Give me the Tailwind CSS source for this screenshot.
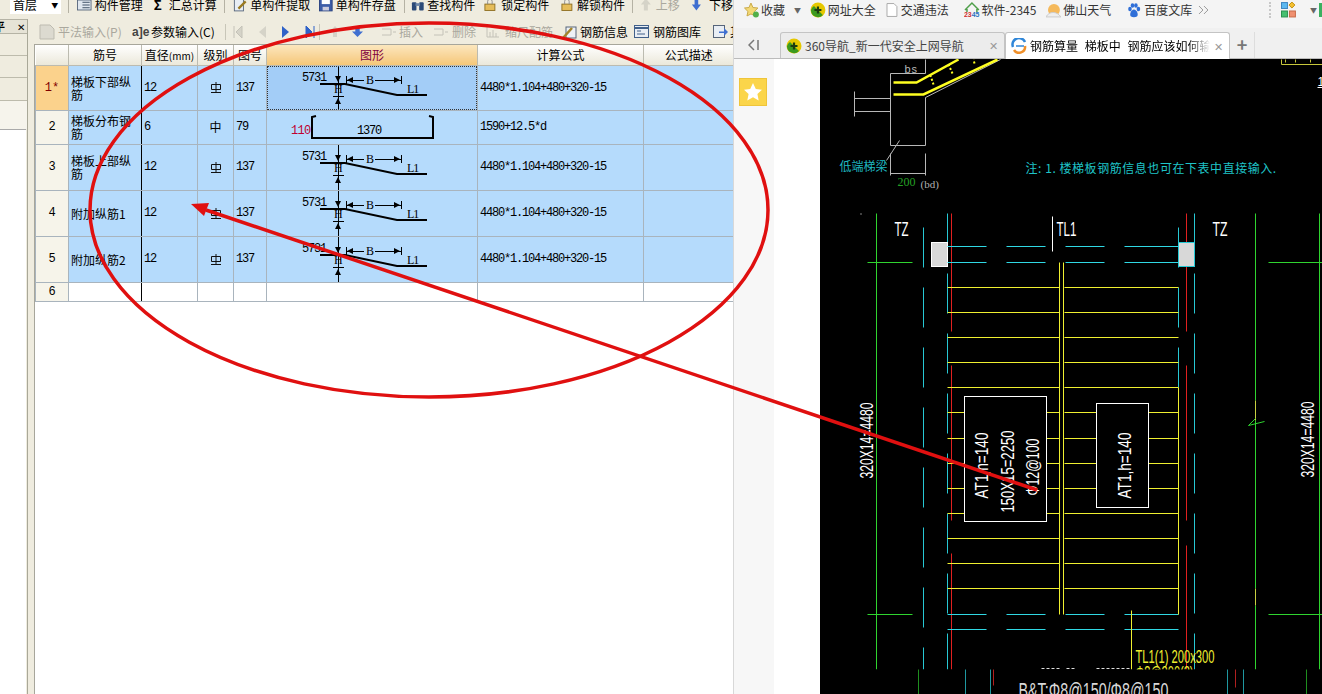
<!DOCTYPE html>
<html lang="zh-CN">
<head>
  <meta charset="UTF-8">
  <title>钢筋算量 梯板中 钢筋应该如何输入</title>
  <script src="https://cdn.jsdelivr.net/npm/@tailwindcss/browser@4"></script>
</head>
<body class="bg-white">
  <svg class="hidden">
    <symbol id="bent">
      <path d="M71.500 0V46" stroke="#000" fill="none"/>
      <path d="M53 18H78L130 29H160" stroke="#000" stroke-width="2" fill="none"/>
      <path d="M66 30.500H77M79 14.500H97M108 14.500H134M79.500 10V18M134.500 10V18" stroke="#000" fill="none"/>
      <path d="M68 10H74L71 16ZM68 38H74L71 32ZM80 14L86 11V17ZM133 14L127 11V17Z" fill="#000"/>
      <text x="35" y="15" font-size="12" font-family="Liberation Mono" fill="#000" textLength="24">5731</text>
      <text x="99" y="18" font-size="12" font-family="Liberation Serif" fill="#000">B</text>
      <text x="67" y="27" font-size="12" font-family="Liberation Serif" fill="#000">H</text>
      <text x="140" y="27" font-size="12" font-family="Liberation Serif" fill="#000">L1</text>
    </symbol>
    <symbol id="grade">
      <path d="M1.500 2.500H10.500V7.500H1.500ZM6 0V10M1 10.500H11" stroke="#111" fill="none"/>
    </symbol>
    <symbol id="i360" viewBox="0 0 16 16">
      <circle cx="8" cy="8" r="7.5" fill="#e6c800"/>
      <path d="M1 8a7 7 0 0 0 12 5L4 4a7 7 0 0 0-3 4Z" fill="#3c9a1e"/>
      <path d="M8 4.500V11.500M4.500 8H11.500" stroke="#1c3c10" stroke-width="2.200"/>
    </symbol>
  </svg>

  <div class="relative flex w-[1322px] h-[694px] overflow-hidden font-['Noto_Sans_CJK_SC',sans-serif] text-[12px] text-black">

    <!-- left: rebar software -->
    <div class="w-[734px] h-full shrink-0 bg-[#efecdf] flex flex-col overflow-hidden border-r border-[#d8d8d8]">
      <div class="h-[16px] -mt-[5px] flex items-center shrink-0 whitespace-nowrap text-[12px] leading-[16px] pt-[3px] overflow-visible">
        <div class="w-[56px] h-[18px] ml-[10px] bg-white flex items-center justify-between px-[3px]"><span>首层</span><span class="text-[7px]">▼</span></div>
        <div class="w-px h-[16px] bg-[#b5b2a4] ml-[7px]"></div>
        <svg class="w-[16px] h-[14px] ml-[8px]" viewBox="0 0 16 14"><rect x=".5" y="1.500" width="15" height="11" fill="#dfe6ee" stroke="#56657a"/><path d="M6 4h8M6 7h8M6 10h8" stroke="#34465c"/></svg>
        <span class="ml-[3px]">构件管理</span>
        <span class="ml-[11px] w-[10px] font-bold text-[13px]">Σ</span>
        <span class="ml-[6px]">汇总计算</span>
        <div class="w-px h-[16px] bg-[#b5b2a4] ml-[7px]"></div>
        <svg class="w-[16px] h-[14px] ml-[8px]" viewBox="0 0 16 14"><rect x="1.500" y=".5" width="10" height="13" fill="#e8eef5" stroke="#56657a"/><path d="M6 11L14 3" stroke="#9a7a20" stroke-width="2.500"/></svg>
        <span class="ml-[3px]">单构件提取</span>
        <svg class="w-[15px] h-[14px] ml-[9px]" viewBox="0 0 15 14"><rect x=".5" y=".5" width="14" height="13" fill="#3d5da8" stroke="#27407e"/><rect x="3" y="1" width="9" height="5" fill="#fff"/><rect x="4" y="9" width="7" height="4" fill="#ccd"/></svg>
        <span class="ml-[3px]">单构件存盘</span>
        <div class="w-px h-[16px] bg-[#b5b2a4] ml-[8px]"></div>
        <svg class="w-[15px] h-[14px] ml-[6px]" viewBox="0 0 15 14"><rect x="1" y="4" width="5" height="9" rx="1" fill="#2c4a78"/><rect x="9" y="4" width="5" height="9" rx="1" fill="#2c4a78"/><rect x="5" y="5" width="5" height="3" fill="#6d86a8"/></svg>
        <span class="ml-[3px]">查找构件</span>
        <svg class="w-[13px] h-[14px] ml-[9px]" viewBox="0 0 13 14"><rect x="1" y="6" width="11" height="7" fill="#e6bd5a" stroke="#8d6d20"/><path d="M4 6V3a2.500 2.500 0 0 1 5 0V6" stroke="#888" fill="none"/></svg>
        <span class="ml-[5px]">锁定构件</span>
        <svg class="w-[13px] h-[14px] ml-[12px]" viewBox="0 0 13 14"><rect x="1" y="6" width="11" height="7" fill="#e6bd5a" stroke="#8d6d20"/><path d="M4 6V3a2.500 2.500 0 0 1 5 0V6" stroke="#888" fill="none"/></svg>
        <span class="ml-[4px]">解锁构件</span>
        <div class="w-px h-[16px] bg-[#b5b2a4] ml-[7px]"></div>
        <span class="ml-[8px] w-[11px] h-[12px] bg-[#d5d3c8] [clip-path:polygon(50%_0,100%_50%,70%_50%,70%_100%,30%_100%,30%_50%,0_50%)]"></span>
        <span class="ml-[5px] text-[#aaa89e]">上移</span>
        <span class="ml-[12px] w-[10px] h-[12px] bg-[#3f6fd0] [clip-path:polygon(30%_0,70%_0,70%_50%,100%_50%,50%_100%,0_50%,30%_50%)]"></span>
        <span class="ml-[8px]">下移</span>
      </div>

      <div class="flex-1 flex mt-[8px] min-h-0">
        <!-- side panel -->
        <div class="w-[28px] shrink-0 flex flex-col border-r border-[#a9a898] overflow-hidden">
          <div class="h-[15px] bg-[#e6e3d6] border-y border-[#b5b3a5] flex items-center justify-between pr-[2px] text-[11px] leading-none font-bold"><span class="-ml-[6px]">平</span><span class="font-normal text-[10px]">✕</span></div>
          <div class="h-[22px] border-b border-[#bdbbac]"></div>
          <div class="h-[22px] border-b border-[#bdbbac]"></div>
          <div class="h-[23px] border-b border-[#bdbbac]"></div>
          <div class="h-[28px] bg-[#f6f4ec]"></div>
          <div class="flex-1 bg-white border-t border-[#aaa] mr-[1px]"></div>
        </div>

        <div class="flex-1 min-w-0 flex flex-col pl-[6px]">
          <!-- input toolbar -->
          <div class="h-[25px] shrink-0 flex items-center whitespace-nowrap overflow-hidden text-[12px]">
            <svg class="w-[16px] h-[16px] ml-[5px] shrink-0" viewBox="0 0 16 16"><path d="M1 1H11L15 5V15H1Z" fill="#dcdad0" stroke="#bdbbb0"/></svg>
            <span class="ml-[3px] text-[#aaa89e] w-[66px] shrink-0">平法输入(P)</span>
            <span class="ml-[8px] w-[16px] shrink-0 font-['Liberation_Sans'] font-bold text-[#444]">a]e</span>
            <span class="ml-[3px] w-[66px] shrink-0">参数输入(C)</span>
            <div class="w-px h-[16px] bg-[#c8c6b8] ml-[8px] shrink-0"></div>
            <svg class="w-[10px] h-[12px] ml-[7px] shrink-0" viewBox="0 0 10 12"><path d="M1 0V12M9 0L3 6L9 12Z" stroke="#c4c2b8" fill="#d5d3c8"/></svg>
            <svg class="w-[7px] h-[12px] ml-[16px] shrink-0" viewBox="0 0 7 12"><path d="M7 0L0 6L7 12Z" fill="#d5d3c8"/></svg>
            <svg class="w-[7px] h-[12px] ml-[16px] shrink-0" viewBox="0 0 7 12"><path d="M0 0L7 6L0 12Z" fill="#2f62c8"/></svg>
            <svg class="w-[10px] h-[12px] ml-[16px] shrink-0" viewBox="0 0 10 12"><path d="M9 0V12M1 0L7 6L1 12Z" stroke="#2f62c8" fill="#2f62c8"/></svg>
            <div class="w-px h-[16px] bg-[#c8c6b8] ml-[4px] shrink-0"></div>
            <span class="ml-[10px] w-[10px] h-[11px] shrink-0 bg-[#d5d3c8] [clip-path:polygon(50%_0,100%_50%,70%_50%,70%_100%,30%_100%,30%_50%,0_50%)]"></span>
            <span class="ml-[12px] w-[11px] h-[11px] shrink-0 bg-[#3f6fd0] [clip-path:polygon(30%_0,70%_0,70%_50%,100%_50%,50%_100%,0_50%,30%_50%)]"></span>
            <svg class="w-[14px] h-[12px] ml-[19px] shrink-0" viewBox="0 0 14 12"><path d="M0 3H9M0 9H9M9 3V9M11 6H14" stroke="#c4c2b8" fill="none"/></svg>
            <span class="ml-[3px] w-[24px] shrink-0 text-[#aaa89e]">插入</span>
            <svg class="w-[14px] h-[12px] ml-[11px] shrink-0" viewBox="0 0 14 12"><path d="M0 3H9M0 9H9M9 3V9M11 6H14" stroke="#c4c2b8" fill="none"/></svg>
            <span class="ml-[4px] w-[24px] shrink-0 text-[#aaa89e]">删除</span>
            <svg class="w-[13px] h-[12px] ml-[10px] shrink-0" viewBox="0 0 13 12"><path d="M1 0V11H13M4 6V11M7 4V11M10 7V11" stroke="#c4c2b8" fill="none"/></svg>
            <span class="ml-[6px] w-[48px] shrink-0 text-[#aaa89e]">缩尺配筋</span>
            <svg class="w-[15px] h-[14px] ml-[9px] shrink-0" viewBox="0 0 15 14"><rect x="4" y="2" width="10" height="11" fill="#eef2f6" stroke="#56657a"/><path d="M1 13L10 3" stroke="#a3842a" stroke-width="2.500"/></svg>
            <span class="ml-[3px] w-[48px] shrink-0">钢筋信息</span>
            <svg class="w-[15px] h-[13px] ml-[6px] shrink-0" viewBox="0 0 15 13"><rect x=".5" y=".5" width="14" height="12" fill="#e9eef4" stroke="#41608a"/><path d="M1 3H14" stroke="#41608a" stroke-width="2"/><path d="M3 6H7M3 9H11" stroke="#41608a"/></svg>
            <span class="ml-[4px] w-[48px] shrink-0">钢筋图库</span>
            <svg class="w-[15px] h-[13px] ml-[12px] shrink-0" viewBox="0 0 15 13"><rect x=".5" y=".5" width="11" height="12" fill="#e9eef4" stroke="#56657a"/><path d="M6 6.500H11V3L15 7L11 11V8H6Z" fill="#3f6fd0"/></svg>
            <span class="ml-[2px] shrink-0">其</span>
          </div>

          <!-- grid -->
          <div class="flex-1 bg-white border-l border-t border-[#a7a69b] overflow-hidden">
            <table class="table-fixed border-collapse w-[698px] text-[12px]">
              <colgroup>
                <col class="w-[33px]"><col class="w-[73px]"><col class="w-[56px]"><col class="w-[36px]"><col class="w-[33px]"><col class="w-[211px]"><col class="w-[166px]"><col class="w-[90px]">
              </colgroup>
              <thead>
                <tr class="h-[20px] bg-linear-to-b from-white to-[#ebe8da] font-normal">
                  <th class="font-normal border-r border-b border-[#bcbbb0]"></th>
                  <th class="font-normal border-r border-b border-[#bcbbb0]">筋号</th>
                  <th class="font-normal border-r border-b border-[#bcbbb0] whitespace-nowrap">直径<span class="text-[10px]">(mm)</span></th>
                  <th class="font-normal border-r border-b border-[#bcbbb0]">级别</th>
                  <th class="font-normal border-r border-b border-[#bcbbb0]">图号</th>
                  <th class="font-normal border-r border-b border-[#bcbbb0] bg-linear-to-b from-[#fbe6bd] to-[#f5c778] text-[#800040]">图形</th>
                  <th class="font-normal border-r border-b border-[#bcbbb0]">计算公式</th>
                  <th class="font-normal border-b border-[#bcbbb0] whitespace-nowrap overflow-hidden">公式描述</th>
                </tr>
              </thead>
              <tbody class="bg-[#b5dbfc] font-['Liberation_Mono','Noto_Sans_CJK_SC',monospace] text-[12px] tracking-[-1.2px] [&_td]:border [&_td]:border-[#a9b4bd]">
                <tr>
                  <td class="text-center !bg-[#fbd28c] text-[#800000] tracking-normal">1*</td>
                  <td class="px-[2px] leading-[13px] !border-r-black font-['Noto_Sans_CJK_SC'] tracking-normal">梯板下部纵筋</td>
                  <td class="px-[2px]">12</td>
                  <td><svg class="block mx-auto w-[12px] h-[11px]"><use href="#grade"/></svg></td>
                  <td class="px-[2px]">137</td>
                  <td class="p-0 !bg-[#a3cdf7]"><svg class="block w-[210px] h-[44px] outline-1 outline-dotted -outline-offset-1 outline-[#333]"><use href="#bent"/></svg></td>
                  <td class="px-[2px]">4480*1.104+480+320-15</td>
                  <td></td>
                </tr>
                <tr>
                  <td class="text-center !bg-[#f6f4ea] tracking-normal">2</td>
                  <td class="px-[2px] leading-[13px] !border-r-black font-['Noto_Sans_CJK_SC'] tracking-normal">梯板分布钢筋</td>
                  <td class="px-[2px]">6</td>
                  <td class="text-center font-['Noto_Sans_CJK_SC'] tracking-normal">中</td>
                  <td class="px-[2px]">79</td>
                  <td class="p-0"><svg class="block w-[210px] h-[33px]"><text x="24" y="23" font-size="12" font-family="Liberation Mono" fill="#c00030" textLength="19">110</text><path d="M49 5L45 6V27H166V6L162 5" stroke="#000" stroke-width="2" fill="none"/><text x="90" y="23" font-size="12" font-family="Liberation Mono" fill="#000" textLength="24">1370</text></svg></td>
                  <td class="px-[2px]">1590+12.5*d</td>
                  <td></td>
                </tr>
                <tr>
                  <td class="text-center !bg-[#f6f4ea] tracking-normal">3</td>
                  <td class="px-[2px] leading-[13px] !border-r-black font-['Noto_Sans_CJK_SC'] tracking-normal">梯板上部纵筋</td>
                  <td class="px-[2px]">12</td>
                  <td><svg class="block mx-auto w-[12px] h-[11px]"><use href="#grade"/></svg></td>
                  <td class="px-[2px]">137</td>
                  <td class="p-0"><svg class="block w-[210px] h-[45px]"><use href="#bent"/></svg></td>
                  <td class="px-[2px]">4480*1.104+480+320-15</td>
                  <td></td>
                </tr>
                <tr>
                  <td class="text-center !bg-[#f6f4ea] tracking-normal">4</td>
                  <td class="px-[2px] leading-[13px] !border-r-black font-['Noto_Sans_CJK_SC'] tracking-normal">附加纵筋1</td>
                  <td class="px-[2px]">12</td>
                  <td><svg class="block mx-auto w-[12px] h-[11px]"><use href="#grade"/></svg></td>
                  <td class="px-[2px]">137</td>
                  <td class="p-0"><svg class="block w-[210px] h-[45px]"><use href="#bent"/></svg></td>
                  <td class="px-[2px]">4480*1.104+480+320-15</td>
                  <td></td>
                </tr>
                <tr>
                  <td class="text-center !bg-[#f6f4ea] tracking-normal">5</td>
                  <td class="px-[2px] leading-[13px] !border-r-black font-['Noto_Sans_CJK_SC'] tracking-normal">附加纵筋2</td>
                  <td class="px-[2px]">12</td>
                  <td><svg class="block mx-auto w-[12px] h-[11px]"><use href="#grade"/></svg></td>
                  <td class="px-[2px]">137</td>
                  <td class="p-0"><svg class="block w-[210px] h-[45px]"><use href="#bent"/></svg></td>
                  <td class="px-[2px]">4480*1.104+480+320-15</td>
                  <td></td>
                </tr>
                <tr class="h-[19px] bg-white">
                  <td class="text-center !bg-[#f6f4ea] tracking-normal">6</td>
                  <td class="!border-r-black"></td><td></td><td></td><td></td><td></td><td></td><td></td>
                </tr>
              </tbody>
            </table>
          </div>
        </div>
      </div>
    </div>

    <!-- right: browser -->
    <div class="flex-1 min-w-0 flex flex-col bg-white">
      <div class="h-[28px] shrink-0 bg-[#f4f4f4] flex items-center whitespace-nowrap text-[12px] text-[#333] pb-[8px]">
        <svg class="w-[16px] h-[16px] ml-[10px]" viewBox="0 0 16 16"><path d="M7 1L9 5.500L14 6L10.500 9.500L11.500 14L7 12L3 14L4 9.500L.5 6L5 5.500Z" fill="#f3d976" stroke="#c9a94a"/><circle cx="12" cy="12.500" r="3" fill="#52b04a"/></svg>
        <span class="ml-[1px]">收藏</span>
        <span class="ml-[9px] text-[7px] text-[#666]">▼</span>
        <svg class="w-[16px] h-[16px] ml-[9px]"><use href="#i360"/></svg>
        <span class="ml-[2px]">网址大全</span>
        <svg class="w-[12px] h-[14px] ml-[10px]" viewBox="0 0 12 14"><path d="M1 .5H8L11 3.500V13.500H1Z" fill="#fff" stroke="#aaa"/></svg>
        <span class="ml-[3px]">交通违法</span>
        <svg class="w-[16px] h-[16px] ml-[15px]" viewBox="0 0 16 16"><path d="M1 8L8 1L15 8M3 7V10M13 7V10" stroke="#4f9f4a" stroke-width="1.500" fill="none"/><text x="0" y="15" font-size="7" font-weight="700" font-family="Liberation Sans" fill="#d03030">23<tspan fill="#2a70c0">45</tspan></text></svg>
        <span class="ml-[2px]">软件-2345</span>
        <svg class="w-[15px] h-[15px] ml-[10px]" viewBox="0 0 15 15"><circle cx="8" cy="7" r="6" fill="#f5b95b"/><path d="M0 14C3 8 11 8 15 14Z" fill="#eee" stroke="#ccc"/></svg>
        <span class="ml-[2px]">佛山天气</span>
        <svg class="w-[14px] h-[15px] ml-[16px]" viewBox="0 0 14 15"><ellipse cx="3" cy="6" rx="1.800" ry="2.300" fill="#2f6fd8"/><ellipse cx="5.500" cy="2.500" rx="1.800" ry="2.300" fill="#2f6fd8"/><ellipse cx="9" cy="2.500" rx="1.800" ry="2.300" fill="#2f6fd8"/><ellipse cx="11.500" cy="6" rx="1.800" ry="2.300" fill="#2f6fd8"/><path d="M7 6.500C10 6.500 12 12 10 13.500C8.500 14.500 5.500 14.500 4 13.500C2 12 4 6.500 7 6.500Z" fill="#2f6fd8"/></svg>
        <span class="ml-[3px]">百度文库</span>
        <svg class="w-[11px] h-[10px] ml-[6px]" viewBox="0 0 11 10"><path d="M1 1L5 5L1 9M6 1L10 5L6 9" stroke="#999" fill="none"/></svg>
        <div class="w-[2px] h-[16px] ml-[60px] border-l-2 border-dotted border-[#c8c8c8]"></div>
        <svg class="w-[15px] h-[16px] ml-[10px]" viewBox="0 0 15 16"><rect x=".5" y=".5" width="6" height="6" fill="#5cb8f0" stroke="#3f86c0"/><path d="M11 0L14 3L11 6L8 3Z" fill="#f5c030" stroke="#c09010"/><rect x=".5" y="9" width="6" height="6" fill="#46c070" stroke="#2c9050"/><rect x="8.500" y="9" width="6" height="6" fill="#f09070" stroke="#c86a48"/></svg>
        <span class="ml-[14px] text-[7px] text-[#666]">▼</span>
        <span class="ml-[2px] w-[3px] h-[14px] bg-[#3cb060]"></span>
      </div>

      <div class="h-[31px] shrink-0 bg-[#f0f0f0] border-b border-[#bbb] flex items-end whitespace-nowrap text-[12px] relative">
        <span class="w-[46px] h-[26px] flex items-center pl-[14px]"><svg class="w-[11px] h-[12px]" viewBox="0 0 11 12"><path d="M6 1L1 6L6 11M10 1V11" stroke="#777" stroke-width="1.500" fill="none"/></svg></span>
        <div class="w-[225px] h-[26px] bg-[#ececec] border border-b-0 border-[#c4c4c4] rounded-t-[3px] flex items-center pl-[5px] text-[#444]">
          <svg class="w-[16px] h-[16px] shrink-0"><use href="#i360"/></svg>
          <span class="ml-[3px] w-[180px] overflow-hidden">360导航_新一代安全上网导航</span>
          <span class="ml-[4px] text-[11px] text-[#999]">✕</span>
        </div>
        <div class="w-[225px] h-[27px] -mb-px bg-white border border-b-0 border-[#c4c4c4] rounded-t-[3px] flex items-center pl-[5px] text-black">
          <svg class="w-[16px] h-[16px] shrink-0" viewBox="0 0 16 16"><path d="M2 9A6 6 0 0 1 14 4" stroke="#2f86d8" stroke-width="2.500" fill="none"/><path d="M14 8A6 6 0 0 1 3 12" stroke="#f0902a" stroke-width="2.500" fill="none"/><path d="M5 8H13" stroke="#2f86d8" stroke-width="1.500"/></svg>
          <span class="ml-[3px] w-[180px] overflow-hidden [word-spacing:4px] [mask-image:linear-gradient(to_right,black_88%,transparent)]">钢筋算量 梯板中 钢筋应该如何输入</span>
          <span class="ml-[4px] text-[11px] text-[#999]">✕</span>
        </div>
        <span class="w-[24px] h-[26px] text-center text-[18px] font-bold leading-[24px] text-[#777]">+</span>
        <span class="w-px h-[26px] bg-[#ddd]"></span>
      </div>

      <div class="flex-1 flex min-h-0">
        <div class="w-[40px] shrink-0 bg-[#f7f7f7] pt-[19px] pl-[5px]">
          <div class="w-[28px] h-[28px] bg-[#fbd54a] border border-[#efc53a] flex items-center justify-center">
            <svg class="w-[20px] h-[20px]" viewBox="0 0 20 20"><path d="M10 1L12.800 7L19 7.800L14.400 12L15.700 18.500L10 15.300L4.300 18.500L5.600 12L1 7.800L7.200 7Z" fill="#fff"/></svg>
          </div>
        </div>
        <div class="w-[46px] shrink-0 bg-white"></div>

        <!-- CAD drawing -->
        <svg class="flex-1 min-w-0 h-full bg-black block" viewBox="820 59 502 635" font-family="Liberation Sans">
          <g transform="translate(.5 .5)">
          <!-- section detail -->
          <path d="M925 59V73H890V145H925V97L1000 59M854 98H890M854 111H890M854 91V116M899 140L886 160M890 153V175M925 153V175M890 173H925" stroke="#b8b8b8" fill="none"/>
          <path d="M893 82H916L958 59M893 94H923L997 59" stroke="#ffff20" stroke-width="2.500" fill="none"/>
          <path d="M933 84L930 75M952 73L948 64M974 63L973 59" stroke="#ffff20" stroke-width="2" stroke-dasharray="2 2" fill="none"/>
          <text x="904" y="72" font-size="11" fill="#b8b8b8" letter-spacing="1">bs</text>
          <text x="839" y="170" font-size="12" fill="#1fb8c0" font-family="Noto Sans CJK SC">低端梯梁</text>
          <text x="897" y="185" font-size="12" fill="#25a025" font-family="Liberation Serif">200</text>
          <text x="920" y="187" font-size="11" fill="#b0b0b0" font-family="Liberation Serif">(bd)</text>
          <text x="1025" y="172" font-size="12" fill="#1fc4c8" letter-spacing=".55" font-family="Noto Sans CJK SC">注: 1. 楼梯板钢筋信息也可在下表中直接输入.</text>
          <path d="M1281 59V64H1322M1285 59V62M1295 59V62M1310 59V62" stroke="#c8c83c" fill="none"/>
          <text x="1317" y="85" font-size="12" fill="#fff">1</text>
          <path d="M1317 87H1322" stroke="#fff"/>

          <!-- axes -->
          <path d="M876 213V669M1255 213V400M1255 420V588M1255 605V669M1319 213V669M867 262H912M1268 262H1322M867 614H912M1268 614H1322" stroke="#2fd42f" fill="none"/>
          <path d="M1255 400V420M1255 588V605" stroke="#c8d040" fill="none"/>
          <path d="M1255 418L1248 425L1264 421" stroke="#2fd42f" fill="none"/>
          <rect x="860" y="213" width="1" height="1" fill="#fff"/>

          <!-- walls -->
          <path d="M923 227V669M1178 227V387M947 213V669M1194 213V669" stroke="#27c8d4" stroke-dasharray="40 20" fill="none"/>
          <path d="M951 213V331M951 365V520M951 553V669M1186 213V331M1186 365V520M1186 545V669" stroke="#e02020" fill="none"/>
          <rect x="931" y="242" width="16" height="24" fill="#d8d8d8" stroke="#fff"/>
          <rect x="1178" y="242" width="16" height="24" fill="#d8d8d8" stroke="#27c8d4"/>

          <!-- beams -->
          <path d="M947 246H986M1006 246H1045M1065 246H1104M1124 246H1178M947 262H986M1006 262H1045M1065 262H1104M1124 262H1178M947 614H986M1006 614H1045M1065 614H1104M1124 614H1178M947 629H986M1006 629H1045M1065 629H1104M1124 629H1178" stroke="#30d8e4" fill="none"/>
          <path d="M1052 216V251" stroke="#fff"/>

          <!-- stair treads -->
          <path d="M1059 262V614M1063 262V614M1178 387V614" stroke="#f0f030" fill="none"/>
          <path d="M947 287H1059M1064 287H1178M947 312H1059M1064 312H1178M947 337H1059M1064 337H1178M947 362H1059M1064 362H1178M947 387H1059M1064 387H1178M947 412H1059M1064 412H1178M947 438H1059M1064 438H1178M947 463H1059M1064 463H1178M947 488H1059M1064 488H1178M947 513H1059M1064 513H1178M947 538H1059M1064 538H1178M947 563H1059M1064 563H1178M947 588H1059M1064 588H1178" stroke="#f0f030" fill="none"/>
          <path d="M1131 610V669" stroke="#f0f030" fill="none"/>

          <rect x="964" y="396" width="82" height="125" fill="#000" stroke="#fff"/>
          <rect x="1096" y="403" width="52" height="104" fill="#000" stroke="#fff"/>

          <!-- labels -->
          <g fill="#fff">
            <text x="894" y="235" font-size="21" textLength="14" lengthAdjust="spacingAndGlyphs">TZ</text>
            <text x="1212" y="235" font-size="21" textLength="15" lengthAdjust="spacingAndGlyphs">TZ</text>
            <text x="1056" y="235" font-size="21" textLength="20" lengthAdjust="spacingAndGlyphs">TL1</text>
            <text transform="translate(872 478) rotate(-90)" font-size="19" textLength="76" lengthAdjust="spacingAndGlyphs">320X14=4480</text>
            <text transform="translate(1313 477) rotate(-90)" font-size="19" textLength="76" lengthAdjust="spacingAndGlyphs">320X14=4480</text>
            <text transform="translate(987 498) rotate(-90)" font-size="19" textLength="66" lengthAdjust="spacingAndGlyphs">AT1,h=140</text>
            <text transform="translate(1013 512) rotate(-90)" font-size="19" textLength="82" lengthAdjust="spacingAndGlyphs">150X15=2250</text>
            <text transform="translate(1038 495) rotate(-90)" font-size="19" textLength="57" lengthAdjust="spacingAndGlyphs">Φ12@100</text>
            <text transform="translate(1130 498) rotate(-90)" font-size="19" textLength="66" lengthAdjust="spacingAndGlyphs">AT1,h=140</text>
          </g>
          <text x="1135" y="662" font-size="18" fill="#f0f030" textLength="79" lengthAdjust="spacingAndGlyphs">TL1(1) 200x300</text>
          <text x="1135" y="678" font-size="18" fill="#f0f030" textLength="58" lengthAdjust="spacingAndGlyphs">Φ8@200(2)</text>
          <path d="M1041 668H1060M1066 668H1076M1096 668H1130" stroke="#ddd" stroke-dasharray="3 2"/>

          <!-- next page of the drawing, clipped -->
          <rect x="820" y="669" width="502" height="25" fill="#000"/>
          <path d="M918 669V694M1306 669V694" stroke="#1f8f1f"/>
          <path d="M965 669V694M990 669V694M1227 669V694M1243 669V694" stroke="#1f98a0"/>
          <path d="M993 669V685M1235 669V687" stroke="#b02020"/>
          <text x="1018" y="697" font-size="22" fill="#d8d8d8" textLength="150" lengthAdjust="spacingAndGlyphs">B&amp;T:Φ8@150/Φ8@150</text>
          </g>
        </svg>
      </div>
    </div>

    <!-- red hand-drawn annotation over both windows -->
    <svg class="absolute inset-0 pointer-events-none" width="1322" height="694" viewBox="0 0 1322 694">
      <ellipse cx="429" cy="210" rx="339" ry="187" fill="none" stroke="#e01010" stroke-width="3.500"/>
      <path d="M206 210L1037 490" stroke="#e01010" stroke-width="3.500"/>
      <path d="M191 204L209 203L204 216Z" fill="#e01010"/>
    </svg>
  </div>
</body>
</html>
